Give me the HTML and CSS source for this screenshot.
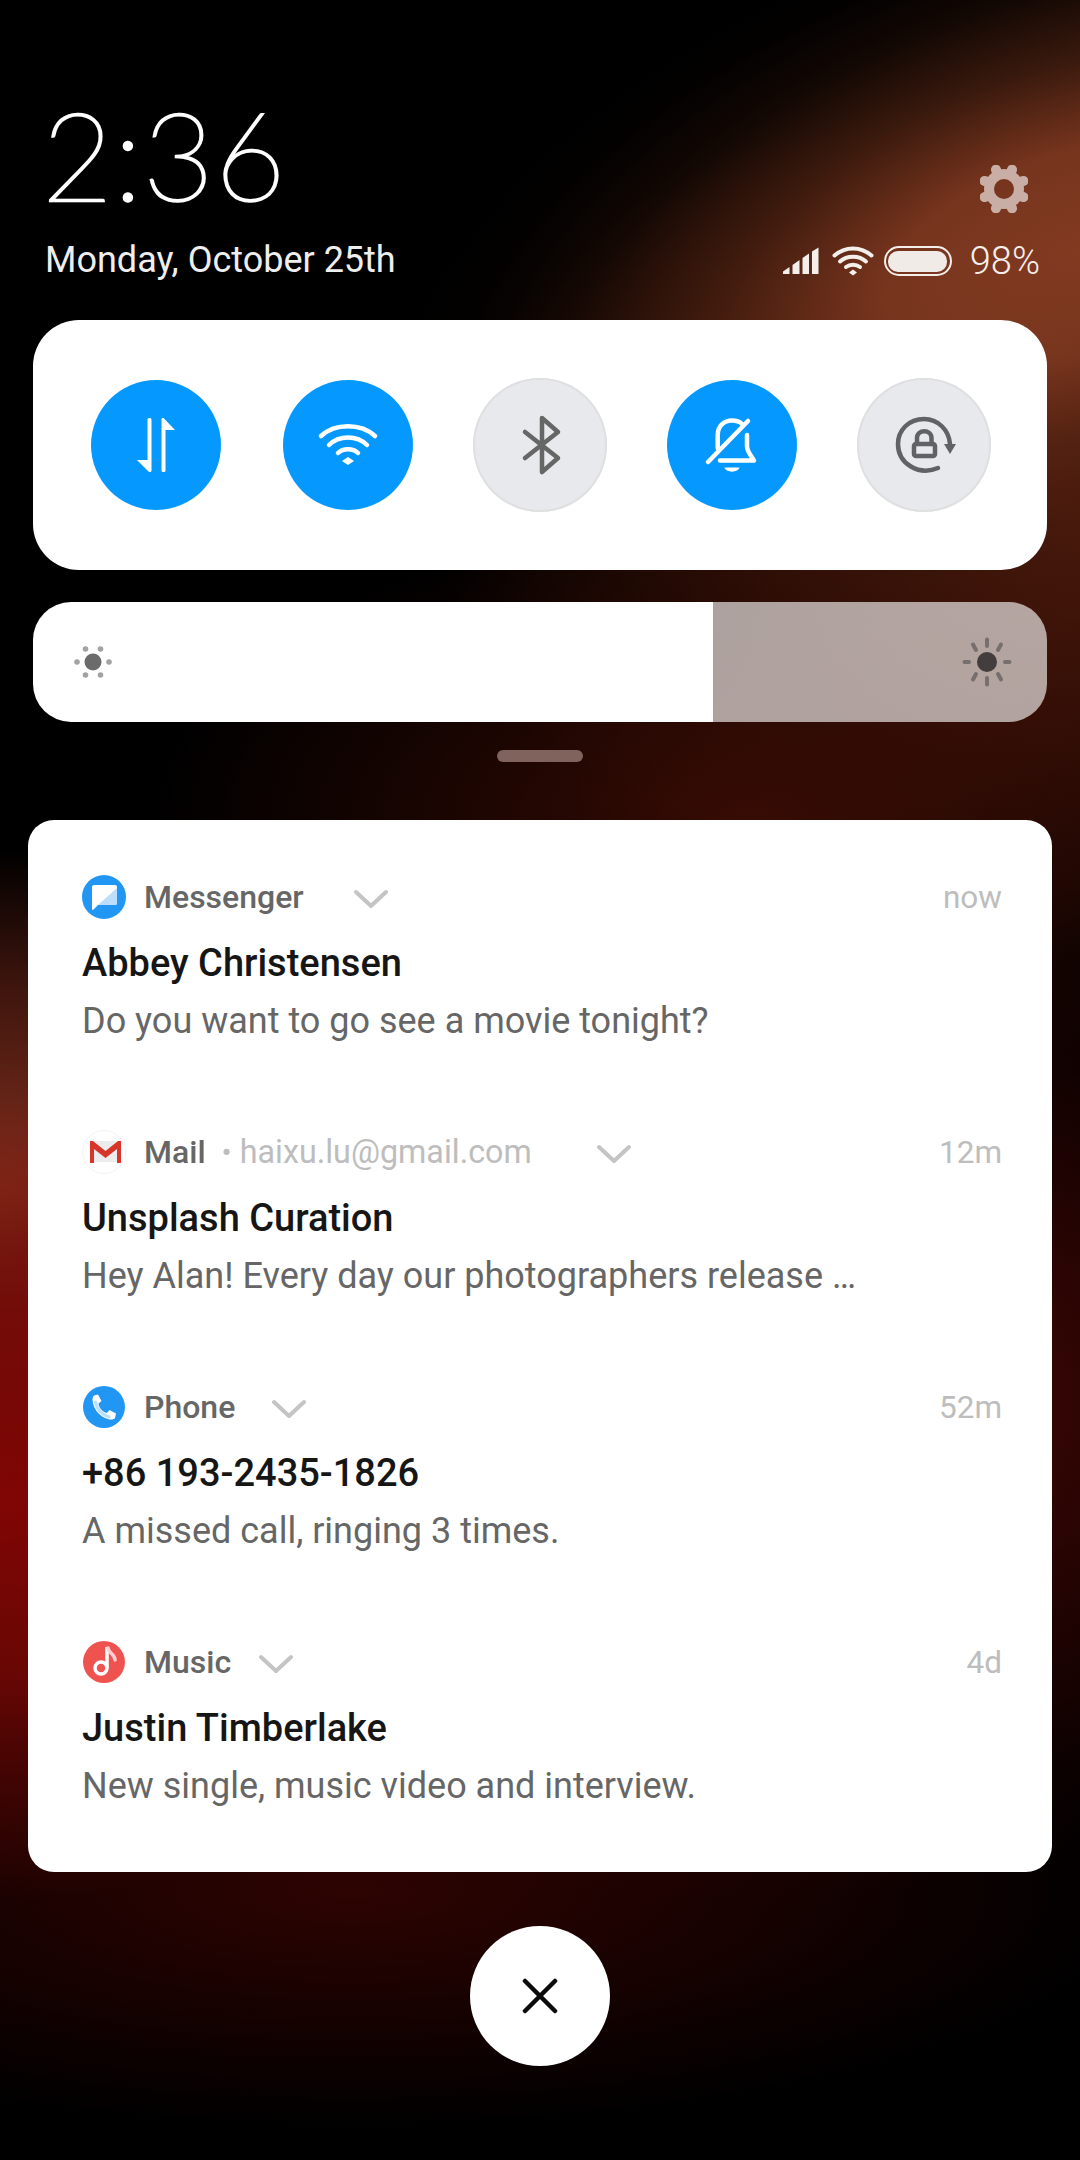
FILE: index.html
```html
<!DOCTYPE html>
<html lang="en">
<head>
<meta charset="utf-8">
<title>Notification shade</title>
<link rel="stylesheet" href="styles.css">
</head>
<body>
<main class="screen">
  <header class="top">
    <div class="clock-col">
      <div class="clock">2:36</div>
      <div class="date">Monday, October 25th</div>
    </div>
    <div class="status-col">
      <svg class="gear" width="52" height="52" viewBox="0 0 52 52">
        <mask id="gearhole"><rect width="52" height="52" fill="#fff"/><circle cx="26" cy="26" r="10" fill="#000"/></mask>
        <g mask="url(#gearhole)" fill="#c9aea6" stroke="#c9aea6">
          <circle cx="26" cy="26" r="20" stroke="none"/>
          <g stroke-width="10" stroke-linecap="round">
            <line x1="26" y1="5" x2="26" y2="47" transform="rotate(22.5 26 26)"/>
            <line x1="26" y1="5" x2="26" y2="47" transform="rotate(67.5 26 26)"/>
            <line x1="26" y1="5" x2="26" y2="47" transform="rotate(112.5 26 26)"/>
            <line x1="26" y1="5" x2="26" y2="47" transform="rotate(157.5 26 26)"/>
          </g>
        </g>
      </svg>
      <div class="status">
        <svg width="38" height="28" viewBox="0 0 38 28" fill="#f4efeb">
          <path d="M1 27V24.500L7.500 20V26.500Q7.500 27 7 27Z"/>
          <path d="M10.500 27V18L17.500 13V27Z"/>
          <path d="M20.500 27V11L27 6.500V27Z"/>
          <path d="M30 27V4.500L36.500 0.500V26.500Q36.500 27 36 27Z"/>
        </svg>
        <svg class="st-wifi" width="42" height="30" viewBox="0 0 42 30" fill="none" stroke="#f4efeb" stroke-width="4" stroke-linecap="round">
          <path d="M2.500 9.500C13 0 29 0 39.500 9.500"/>
          <path d="M8 15.500C15 9 27 9 34 15.500"/>
          <path d="M14 21C18 18 24 18 28 21"/>
          <path d="M21 23.500L25 26.500L21 29.500L17 26.500Z" fill="#f4efeb" stroke="none"/>
        </svg>
        <div class="batt"><div class="batt-fill"></div></div>
        <span class="pct">98%</span>
      </div>
    </div>
  </header>

  <section class="qs">
    <div class="tile tile-on">
      <svg width="130" height="130" viewBox="0 0 130 130" fill="#fff">
        <path d="M58 38H59Q60.500 38 60.500 39.500V90.500Q60.500 92 59 92H58L46 80H56.500V39.500Q56.500 38 58 38Z"/>
        <path d="M71.500 38H72.500L84 50H74.500V90.500Q74.500 92 73 92H72Q70.500 92 70.500 90.500V39.500Q70.500 38 71.500 38Z"/>
      </svg>
    </div>
    <div class="tile tile-on">
      <svg width="130" height="130" viewBox="0 0 130 130" fill="none" stroke="#fff" stroke-width="4.500" stroke-linecap="round">
        <path d="M38 56C52 43 78 43 92 56"/>
        <path d="M46 65C56 55 74 55 84 65"/>
        <path d="M55 73C60 68 70 68 75 73"/>
        <path d="M65 77L71 81L65 85L59 81Z" fill="#fff" stroke="none"/>
      </svg>
    </div>
    <div class="tile tile-off">
      <svg width="134" height="134" viewBox="0 0 134 134" fill="none" stroke="#666" stroke-width="4.500" stroke-linecap="round" stroke-linejoin="round">
        <path d="M52 54L85 80L69 94V40L85 54L52 80"/>
      </svg>
    </div>
    <div class="tile tile-on">
      <svg width="130" height="130" viewBox="0 0 130 130" fill="none" stroke="#fff" stroke-width="4.500" stroke-linecap="round" stroke-linejoin="round">
        <path d="M41 82L81 41"/>
        <path d="M50.700 68V55C50.700 46 57 40.500 65 40.500C69 40.500 72.500 41.500 75 44"/>
        <path d="M80 55V66C80 72 84 75 87 80.500H53"/>
        <path d="M57.500 87.500H72.500C71 93 59 93 57.500 87.500Z" fill="#fff" stroke="none"/>
      </svg>
    </div>
    <div class="tile tile-off">
      <svg width="134" height="134" viewBox="0 0 134 134" fill="none" stroke="#616266" stroke-width="4.500" stroke-linecap="round" stroke-linejoin="round">
        <path d="M81 90C62 98 41 86 41 66C41 52 52 41 67 41C81 41 92 52 93 66"/>
        <path d="M87 66H99L93 76Z" fill="#616266" stroke="none"/>
        <path d="M60 66V60C60 51 74.500 51 74.500 60V66"/>
        <rect x="57" y="66" width="21" height="12" rx="2"/>
      </svg>
    </div>
  </section>

  <section class="bright">
    <div class="bright-fill">
      <svg width="38" height="38" viewBox="0 0 38 38" fill="#a2a2a2">
        <circle cx="19" cy="19" r="8.500" fill="#6b6b6b"/>
        <circle cx="11.500" cy="6" r="2.800"/><circle cx="26.500" cy="6" r="2.800"/>
        <circle cx="11.500" cy="32" r="2.800"/><circle cx="26.500" cy="32" r="2.800"/>
        <circle cx="3" cy="19" r="2.800"/><circle cx="35" cy="19" r="2.800"/>
      </svg>
    </div>
    <div class="bright-rest">
      <svg width="50" height="50" viewBox="0 0 50 50" fill="none" stroke="#766f6d" stroke-width="4" stroke-linecap="round">
        <circle cx="25" cy="25" r="10" fill="#433e3d" stroke="none"/>
        <path d="M25 2.500V9M25 41V47.500M2.500 25H7M43 25H47.500M11 7.500L14 13M36 37L39 42.500M11 42.500L14 37M36 13L39 7.500"/>
      </svg>
    </div>
  </section>

  <div class="handle"></div>

  <section class="notes">
    <article class="note">
      <div class="note-head">
        <svg class="app" width="44" height="44" viewBox="0 0 44 44">
          <circle cx="22" cy="22" r="22" fill="#2196f3"/>
          <path d="M10 12Q10 10 12 10H33Q35 10 35 12V28Q35 30 33 30H16L11 35Q10 35 10 34Z" fill="#fff"/>
          <path d="M35 13V28Q35 30 33 30H16Z" fill="#bbdefb"/>
        </svg>
        <span class="app-name">Messenger</span>
        <svg class="chev chev-a" width="34" height="20" viewBox="0 0 34 20" fill="none" stroke="#c4c4c4" stroke-width="4" stroke-linecap="round" stroke-linejoin="round"><path d="M2 3L17 17L32 3"/></svg>
        <span class="age">now</span>
      </div>
      <h2 class="note-title">Abbey Christensen</h2>
      <p class="note-body">Do you want to go see a movie tonight?</p>
    </article>
    <article class="note">
      <div class="note-head">
        <svg class="app" width="44" height="44" viewBox="0 0 44 44">
          <circle cx="22" cy="22" r="21.500" fill="#fff" stroke="#f2f2f2"/>
          <path d="M9 11H38V32H9Z" fill="#ececec"/>
          <path d="M8 11H11L23.500 21L36 11H39V33H35V19L23.500 28L12 19V33H8Z" fill="#d8352a"/>
        </svg>
        <span class="app-name">Mail</span>
        <span class="acct"><span class="acct-dot">•</span> haixu.lu@gmail.com</span>
        <svg class="chev chev-b" width="34" height="20" viewBox="0 0 34 20" fill="none" stroke="#c4c4c4" stroke-width="4" stroke-linecap="round" stroke-linejoin="round"><path d="M2 3L17 17L32 3"/></svg>
        <span class="age">12m</span>
      </div>
      <h2 class="note-title">Unsplash Curation</h2>
      <p class="note-body">Hey Alan! Every day our photographers release …</p>
    </article>
    <article class="note">
      <div class="note-head">
        <svg class="app" width="44" height="44" viewBox="0 0 44 44">
          <circle cx="22" cy="22" r="21" fill="#2196f3"/>
          <path d="M12 10.500L16 9.500L19.500 16L16.500 18.500C17 23 20.500 27 25 28L27.500 25L34 28.500L33 33C32 34.500 29 35 26 34C18 32 11 24 10.500 15C10.500 13 11 11.500 12 10.500Z" fill="#fff"/>
          <path d="M13.500 17C14.500 24 20 30 27 32" fill="none" stroke="#bbdefb" stroke-width="3" stroke-linecap="round"/>
        </svg>
        <span class="app-name">Phone</span>
        <svg class="chev chev-c" width="34" height="20" viewBox="0 0 34 20" fill="none" stroke="#c4c4c4" stroke-width="4" stroke-linecap="round" stroke-linejoin="round"><path d="M2 3L17 17L32 3"/></svg>
        <span class="age">52m</span>
      </div>
      <h2 class="note-title">+86 193-2435-1826</h2>
      <p class="note-body">A missed call, ringing 3 times.</p>
    </article>
    <article class="note">
      <div class="note-head">
        <svg class="app" width="44" height="44" viewBox="0 0 44 44">
          <circle cx="22" cy="22" r="21" fill="#ef5350"/>
          <path d="M25 7V28" fill="none" stroke="#fff" stroke-width="3.500"/>
          <path d="M26 8C27 14 33 14 33 20" fill="none" stroke="#ffcdd2" stroke-width="3.500" stroke-linecap="round"/>
          <circle cx="19" cy="28" r="6" fill="none" stroke="#fff" stroke-width="3.500"/>
        </svg>
        <span class="app-name">Music</span>
        <svg class="chev chev-d" width="34" height="20" viewBox="0 0 34 20" fill="none" stroke="#c4c4c4" stroke-width="4" stroke-linecap="round" stroke-linejoin="round"><path d="M2 3L17 17L32 3"/></svg>
        <span class="age">4d</span>
      </div>
      <h2 class="note-title">Justin Timberlake</h2>
      <p class="note-body">New single, music video and interview.</p>
    </article>
  </section>

  <button class="close" type="button" aria-label="Dismiss all">
    <svg width="36" height="36" viewBox="0 0 36 36" fill="none" stroke="#0c0c0c" stroke-width="4.500" stroke-linecap="round"><path d="M3 3L33 33M33 3L3 33"/></svg>
  </button>
</main>
</body>
</html>
```

FILE: styles.css
```css
* { box-sizing: border-box; }
html, body { margin: 0; padding: 0; }
body { width: 1080px; height: 2160px; overflow: hidden; background: #000; font-family: Roboto, "Liberation Sans", sans-serif; }

.screen {
  position: relative;
  isolation: isolate;
  overflow: hidden;
  width: 1080px;
  height: 2160px;
  padding: 0 33px;
  display: flex;
  flex-direction: column;
  background:
    radial-gradient(ellipse 640px 440px at 1080px 520px, rgba(90, 30, 14, .85) 0%, rgba(60, 16, 6, .55) 60%, rgba(40, 8, 4, 0) 100%),
    radial-gradient(ellipse 560px 400px at 0px 1500px, rgba(128, 6, 4, 1) 0%, rgba(120, 8, 5, .85) 45%, rgba(60, 4, 2, 0) 100%),
    radial-gradient(ellipse 520px 340px at 0px 1190px, rgba(130, 48, 30, 1) 0%, rgba(95, 32, 20, .65) 60%, rgba(40, 10, 6, 0) 100%),
    radial-gradient(ellipse 900px 500px at 700px 1400px, rgba(110, 14, 8, .8) 0%, rgba(60, 6, 4, .5) 60%, rgba(20, 0, 0, 0) 100%),
    radial-gradient(ellipse 800px 240px at 350px 1890px, rgba(50, 4, 2, .9) 0%, rgba(30, 2, 0, 0) 100%),
    radial-gradient(ellipse 600px 300px at 750px 820px, rgba(60, 12, 4, .9) 0%, rgba(20, 4, 0, 0) 100%),
    #000;
}
.screen::before {
  content: "";
  position: absolute;
  z-index: -1;
  left: 360px;
  top: -100px;
  width: 1440px;
  height: 700px;
  transform: rotate(-18deg);
  background: radial-gradient(closest-side, rgba(130, 58, 33, 1) 0%, rgba(124, 55, 31, .95) 28%, rgba(95, 42, 22, .62) 52%, rgba(60, 25, 12, .3) 74%, rgba(40, 14, 6, .08) 90%, rgba(40, 14, 6, 0) 100%);
}

.top { height: 320px; display: flex; justify-content: space-between; align-items: flex-end; padding: 0 7px 40px 12px; }
.clock-col { display: flex; flex-direction: column; }
.clock { font-family: Lato, sans-serif; font-weight: 100; font-size: 122px; line-height: 122px; color: #fff; -webkit-text-stroke: 2.500px #fff; margin: 0 0 25px -3px; letter-spacing: 1px; }
.date { font-size: 36px; line-height: 40px; color: #eee; }
.status-col { display: flex; flex-direction: column; align-items: flex-end; gap: 29px; }
.gear { margin-right: 10px; }
.status { display: flex; align-items: center; height: 34px; color: #f4efeb; margin-bottom: 2px; }
.st-wifi { margin-left: 12px; }
.batt { width: 68px; height: 30px; margin-left: 10px; border: 2.500px solid #f4efeb; border-radius: 15px; padding: 2.500px; }
.batt-fill { width: 100%; height: 100%; background: #f1ebe7; border-radius: 10px; }
.pct { font-size: 38px; font-weight: 300; margin-left: 18px; }

.qs {
  height: 250px;
  padding: 0 27px;
  background: #fff;
  border-radius: 46px;
  display: grid;
  grid-template-columns: repeat(5, 192px);
  align-items: center;
  justify-items: center;
  flex: none;
}
.tile { border-radius: 50%; display: flex; }
.tile-on { width: 130px; height: 130px; background: #0599ff; }
.tile-off { width: 134px; height: 134px; background: #e8e9ec; box-shadow: inset 0 0 0 2px #e0e0e2; }

.bright { height: 120px; margin-top: 32px; border-radius: 38px; overflow: hidden; display: flex; flex: none; }
.bright-fill { width: 680px; background: #fff; display: flex; align-items: center; padding-left: 41px; }
.bright-rest { flex: 1; background: rgba(255, 255, 255, .62); display: flex; align-items: center; justify-content: flex-end; padding-right: 35px; }

.handle { width: 86px; height: 12px; margin: 28px auto 0; background: #7f635c; border-radius: 6px; flex: none; }

.notes {
  margin: 58px -5px 0;
  height: 1052px;
  padding: 50px 0 0;
  background: #fff;
  border-radius: 26px;
  display: flex;
  flex-direction: column;
  flex: none;
}
.note { height: 255px; padding: 0 50px 0 54px; flex: none; }
.note-head { display: flex; align-items: center; height: 54px; }
.app { flex: none; }
.app-name { margin-left: 18px; font-size: 32px; font-weight: 500; color: #666; }
.acct { margin-left: 16px; font-size: 32.300px; font-weight: 400; color: #bdbdbd; }
.acct-dot { font-size: 30px; }
.chev { flex: none; position: relative; top: 2px; }
.chev-a { margin-left: 50px; }
.chev-b { margin-left: 65px; }
.chev-c { margin-left: 37px; }
.chev-d { margin-left: 28px; }
.age { margin-left: auto; font-size: 31.500px; color: #bdbdbd; }
.note-title { margin: 17px 0 0; font-size: 38px; line-height: 44px; font-weight: 500; color: #161616; }
.note-body { margin: 14px 0 0; font-size: 36px; line-height: 44px; color: #666; }

.close {
  width: 140px;
  height: 140px;
  margin: 54px auto 0;
  padding: 0;
  border: 0;
  background: #fff;
  border-radius: 50%;
  display: flex;
  align-items: center;
  justify-content: center;
  flex: none;
}
```
